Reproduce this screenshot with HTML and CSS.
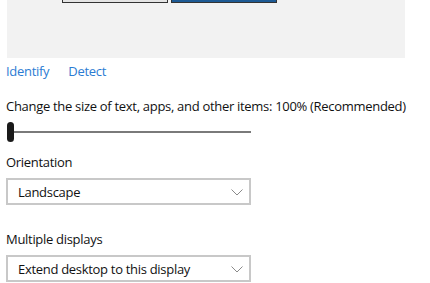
FILE: index.html
```html
<!DOCTYPE html>
<html lang="en">
<head>
    <meta charset="UTF-8">
    <title>Display settings</title>
    <link rel="stylesheet" href="styles.css">
</head>
<body>
    <div class="page">
        <div class="preview">
            <div class="monitor"></div>
            <div class="monitor selected"></div>
        </div>

        <div class="links">
            <a href="#" class="link">Identify</a>
            <a href="#" class="link">Detect</a>
        </div>

        <div class="setting scale">
            <p class="label">Change the size of text, apps, and other items: 100% (Recommended)</p>
            <div class="slider">
                <div class="thumb"></div>
                <div class="track"></div>
            </div>
        </div>

        <div class="setting orientation">
            <p class="label">Orientation</p>
            <div class="dropdown">
                <span>Landscape</span>
                <svg class="chevron" width="12" height="7" viewBox="0 0 12 7"><path d="M0.5 0.5 L6 6 L11.5 0.5" fill="none" stroke="#8a8a8a" stroke-width="1"/></svg>
            </div>
        </div>

        <div class="setting displays">
            <p class="label">Multiple displays</p>
            <div class="dropdown">
                <span>Extend desktop to this display</span>
                <svg class="chevron" width="12" height="7" viewBox="0 0 12 7"><path d="M0.5 0.5 L6 6 L11.5 0.5" fill="none" stroke="#8a8a8a" stroke-width="1"/></svg>
            </div>
        </div>
    </div>
</body>
</html>
```

FILE: styles.css
```css
* {
    margin: 0;
    padding: 0;
    box-sizing: border-box;
}

body {
    font-family: 'Open Sans', 'Noto Sans', sans-serif;
    font-size: 13px;
    letter-spacing: -0.3px;
    background: #fff;
    color: #111;
    overflow: hidden;
}

.page {
    padding-left: 6px;
}

.preview {
    display: flex;
    gap: 3px;
    margin-left: 1px;
    width: 398px;
    height: 58px;
    padding-left: 55px;
    background: #f2f2f2;
}

.monitor {
    width: 106px;
    height: 3px;
    background: #e4e4e4;
    border: 1px solid #333;
    border-top: none;
}

.monitor.selected {
    background: #1d5a94;
}

.links {
    display: flex;
    gap: 19px;
    margin-top: 3px;
    line-height: 20px;
}

.link {
    color: #2b7cd3;
    text-decoration: none;
}

.label {
    line-height: 20px;
    white-space: nowrap;
}

.setting.scale {
    margin-top: 15px;
}

.setting.orientation {
    margin-top: 10px;
}

.setting.displays {
    margin-top: 24px;
}

.slider {
    display: flex;
    align-items: center;
    height: 20px;
    margin-top: 6px;
    margin-left: 1px;
}

.thumb {
    width: 7px;
    height: 20px;
    background: #1a1a1a;
    border-radius: 4px;
}

.track {
    width: 237px;
    height: 2px;
    background: #7a7a7a;
}

.dropdown {
    display: flex;
    align-items: center;
    justify-content: space-between;
    width: 245px;
    height: 27px;
    margin-top: 6px;
    padding: 0 6px 0 10px;
    border: 2px solid #c8c8c8;
}

.chevron {
    margin-top: 1px;
}
```
